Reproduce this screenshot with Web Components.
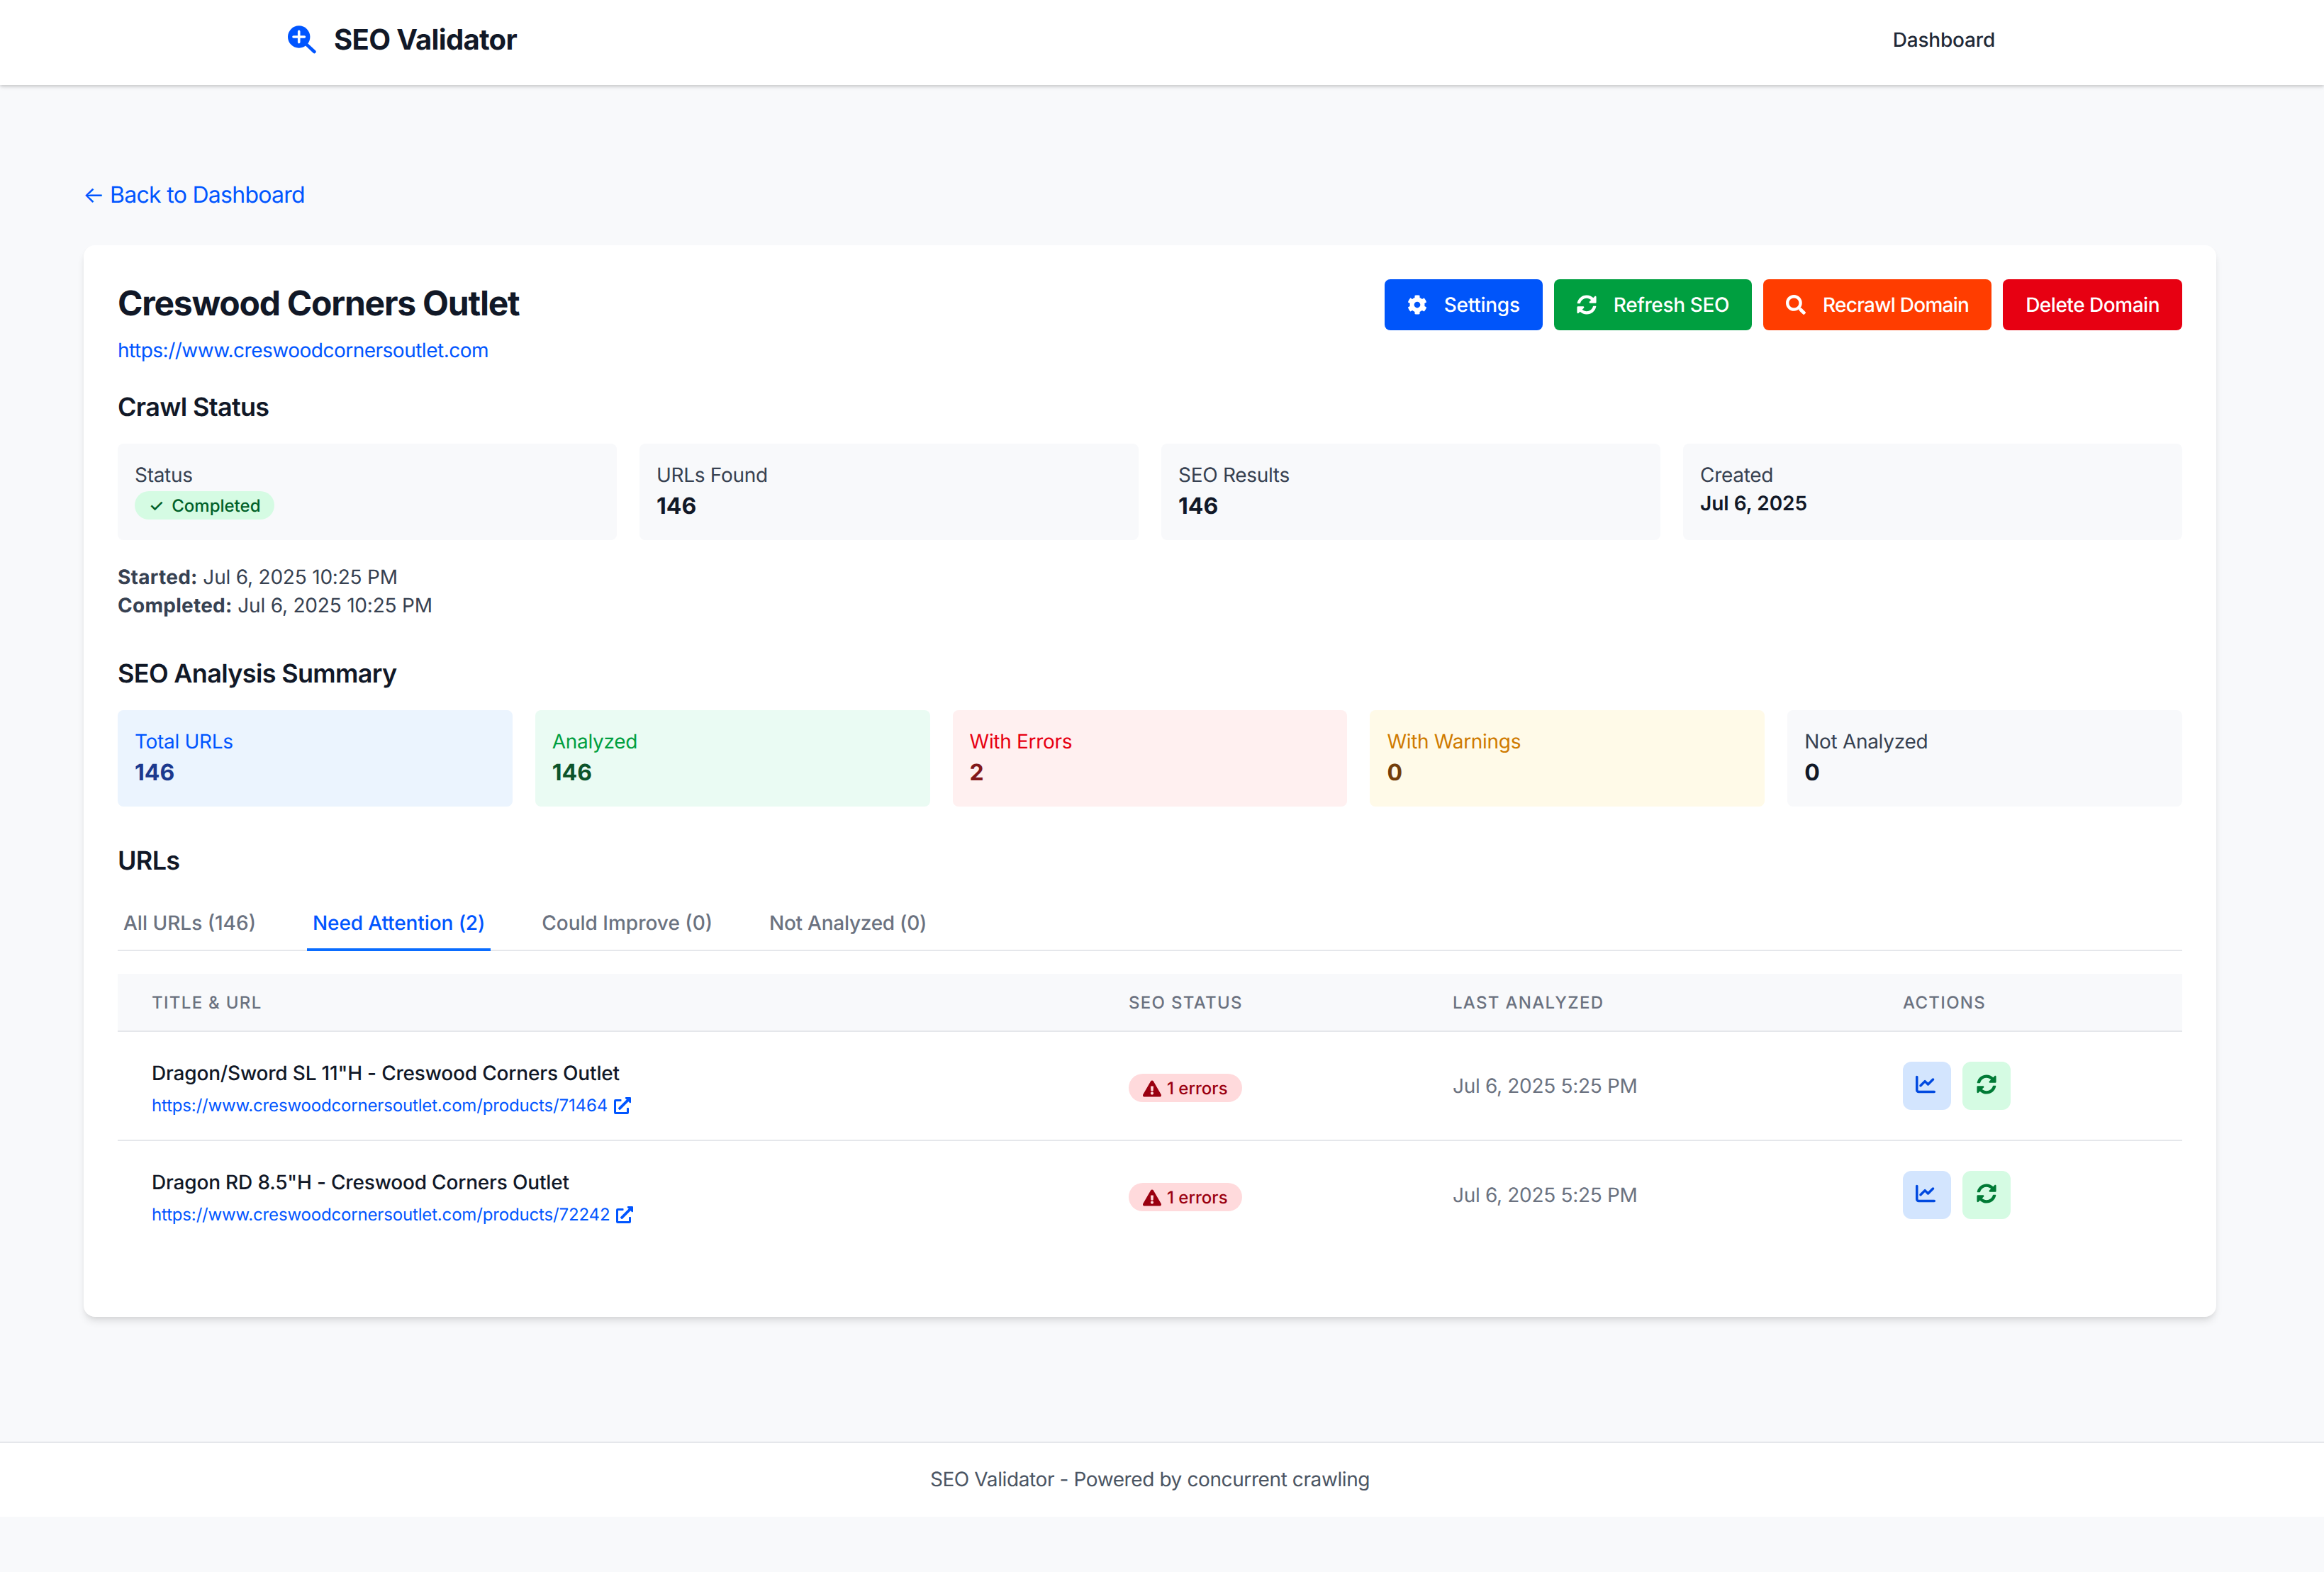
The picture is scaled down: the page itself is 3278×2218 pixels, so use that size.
<!DOCTYPE html>
<html lang="en"><head><meta charset="utf-8"><title>SEO Validator</title>
<style>
html{zoom:2;background:#f8f9fb}
body{margin:0;font-family:Inter,"Liberation Sans",sans-serif;color:#111827;background:#f8f9fb;text-rendering:geometricPrecision;-webkit-font-smoothing:antialiased}
</style></head><body>
<seo-header></seo-header>
<seo-main></seo-main>
<seo-footer></seo-footer>
<script>
const ICONS={
cog:['0 0 512 512','M487.4 315.7l-42.6-24.6c4.3-23.2 4.3-47 0-70.2l42.6-24.6c4.9-2.8 7.1-8.6 5.5-14-11.1-35.6-30-67.8-54.7-94.6-3.8-4.1-10-5.1-14.8-2.3L380.8 110c-17.9-15.4-38.5-27.3-60.8-35.1V25.8c0-5.6-3.9-10.5-9.4-11.7-36.7-8.2-74.3-7.8-109.2 0-5.5 1.2-9.4 6.1-9.4 11.7V75c-22.2 7.9-42.8 19.8-60.8 35.1L88.7 85.5c-4.9-2.8-11-1.9-14.8 2.3-24.7 26.7-43.6 58.9-54.7 94.6-1.7 5.4.6 11.2 5.5 14L67.3 221c-4.3 23.2-4.3 47 0 70.2l-42.6 24.6c-4.9 2.8-7.1 8.6-5.5 14 11.1 35.6 30 67.8 54.7 94.6 3.8 4.1 10 5.1 14.8 2.3l42.6-24.6c17.9 15.4 38.5 27.3 60.8 35.1v49.2c0 5.6 3.9 10.5 9.4 11.7 36.7 8.2 74.3 7.8 109.2 0 5.5-1.2 9.4-6.1 9.4-11.7v-49.2c22.2-7.9 42.8-19.8 60.8-35.1l42.6 24.6c4.9 2.8 11 1.9 14.8-2.3 24.7-26.7 43.6-58.9 54.7-94.6 1.5-5.5-.7-11.3-5.6-14.1zM256 336c-44.1 0-80-35.9-80-80s35.9-80 80-80 80 35.9 80 80-35.9 80-80 80z'],
sync:['0 0 512 512','M370.72 133.28C339.458 104.008 298.888 87.962 255.848 88c-77.458.068-144.328 53.178-162.791 126.85-1.344 5.363-6.122 9.15-11.651 9.15H24.103c-7.498 0-13.194-6.807-11.807-14.176C33.933 94.924 134.813 8 256 8c66.448 0 126.791 26.136 171.315 68.685L463.03 40.97C478.149 25.851 504 36.559 504 57.941V192c0 13.255-10.745 24-24 24H345.941c-21.382 0-32.09-25.851-16.971-40.971l41.75-41.749zM32 296h134.059c21.382 0 32.09 25.851 16.971 40.971l-41.75 41.75c31.262 29.273 71.835 45.319 114.876 45.28 77.418-.07 144.315-53.144 162.787-126.849 1.344-5.363 6.122-9.15 11.651-9.15h57.304c7.498 0 13.194 6.807 11.807 14.176C478.067 417.076 377.187 504 256 504c-66.448 0-126.791-26.136-171.315-68.685L48.97 471.03C33.851 486.149 8 475.441 8 454.059V320c0-13.255 10.745-24 24-24z'],
search:['0 0 512 512','M505 442.7L405.3 343c-4.5-4.5-10.6-7-17-7H372c27.6-35.3 44-79.7 44-128C416 93.1 322.9 0 208 0S0 93.1 0 208s93.1 208 208 208c48.3 0 92.7-16.4 128-44v16.3c0 6.4 2.5 12.5 7 17l99.7 99.7c9.4 9.4 24.6 9.4 33.9 0l28.3-28.3c9.4-9.4 9.4-24.6.1-34zM208 336c-70.7 0-128-57.2-128-128 0-70.7 57.2-128 128-128 70.7 0 128 57.2 128 128 0 70.7-57.2 128-128 128z'],
chart:['0 0 512 512','M64 64c0-17.7-14.3-32-32-32S0 46.3 0 64V400c0 44.2 35.8 80 80 80H480c17.7 0 32-14.3 32-32s-14.3-32-32-32H80c-8.8 0-16-7.2-16-16V64zm406.6 86.6c12.5-12.5 12.5-32.8 0-45.3s-32.8-12.5-45.3 0L320 210.7l-57.4-57.4c-12.5-12.5-32.8-12.5-45.3 0l-112 112c-12.5 12.5-12.5 32.8 0 45.3s32.8 12.5 45.3 0L240 221.3l57.4 57.4c12.5 12.5 32.8 12.5 45.3 0l128-128z'],
warn:['0 0 576 512','M569.517 440.013C587.975 472.007 564.806 512 527.94 512H48.054c-36.937 0-59.999-40.055-41.577-71.987L246.423 24.028c18.467-32.009 64.72-31.951 83.154 0l239.94 416.985zM288 354c-25.405 0-46 20.595-46 46s20.595 46 46 46 46-20.595 46-46-20.595-46-46-46zm-43.673-165.346l7.418 136c.347 6.364 5.609 11.346 11.982 11.346h48.546c6.373 0 11.635-4.982 11.982-11.346l7.418-136c.375-6.874-5.098-12.654-11.982-12.654h-63.383c-6.884 0-12.356 5.78-11.981 12.654z'],
ext:['0 0 512 512','M432,320H400a16,16,0,0,0-16,16V448H64V128H208a16,16,0,0,0,16-16V80a16,16,0,0,0-16-16H48A48,48,0,0,0,0,112V464a48,48,0,0,0,48,48H400a48,48,0,0,0,48-48V336A16,16,0,0,0,432,320ZM488,0h-128c-21.37,0-32.05,25.91-17,41l35.73,35.73L135,320.37a24,24,0,0,0,0,34L157.67,377a24,24,0,0,0,34,0L435.28,133.32,471,169c15,15,41,4.5,41-17V24A24,24,0,0,0,488,0Z']
};
const icon=(n,w)=>`<svg width="${w}" height="${w}" viewBox="${ICONS[n][0]}" fill="currentColor" aria-hidden="true" style="display:block;flex:none"><path d="${ICONS[n][1]}"/></svg>`;
function def(name,css,html){
  customElements.define(name,class extends HTMLElement{
    connectedCallback(){
      if(this.shadowRoot)return;
      const r=this.attachShadow({mode:'open'});
      r.innerHTML=`<style>*{box-sizing:border-box}:host{box-sizing:border-box}${css}</style>`+(typeof html==='function'?html(this):html);
    }
  });
}
def('seo-header',`:host{display:block;background:#fff;height:60px;box-shadow:0 1px 3px rgba(0,0,0,.12),0 1px 2px rgba(0,0,0,.1)}
nav{display:flex;align-items:center;justify-content:space-between;height:100%;margin-left:203px;width:1204px;padding-bottom:4px}
.brand{display:flex;align-items:center;gap:12.5px;font-size:20px;line-height:28px;font-weight:700;color:#111827;letter-spacing:-.33px}
.dash{font-size:14px;line-height:20px;font-weight:500;color:#1f2937;letter-spacing:-.1px}`,
`<nav><div class="brand"><svg width="20" height="20" viewBox="0 0 20 20" aria-hidden="true" style="display:block"><circle cx="7.85" cy="8" r="7.85" fill="#0055ff"/><path d="M12.6 12.8L18.7 18.5" stroke="#0055ff" stroke-width="2.3" stroke-linecap="round"/><path d="M4 8h7.7M7.85 4.2v7.6" stroke="#fff" stroke-width="1.8" stroke-linecap="round"/></svg><span>SEO Validator</span></div><span class="dash">Dashboard</span></nav>`);
def('seo-footer',`:host{display:block;background:#fff;border-top:1px solid #e5e7eb;height:53px;padding-right:17px;margin-top:88px}
p{margin:0;text-align:center;font-size:14px;line-height:51px;color:#4b5563;letter-spacing:-.2px}`,`<p>SEO Validator - Powered by concurrent crawling</p>`);
def('seo-btn',`:host{display:inline-flex;align-items:center;height:36px;padding:0 16px;border-radius:4px;color:#fff;font-size:14px;line-height:20px;font-weight:500;background:var(--b);letter-spacing:var(--ls,0)}
::slotted(svg){margin-right:12px}`,`<slot></slot>`);
def('seo-stat',`:host{display:block;border-radius:4px;padding:12px;background:var(--bg,#f8f9fb);height:68px}
.l{font-size:14px;line-height:20px;color:var(--lc,#374151);letter-spacing:-.15px}
.v{font-size:16px;line-height:24px;font-weight:700;color:var(--vc,#111827)}`,
h=>`<div class="l">${h.getAttribute('label')}</div><div class="v"><slot></slot></div>`);
def('seo-badge',`:host{display:inline-flex;align-items:center;height:20px;padding:1px 10px 0;border-radius:10px;font-size:12px;line-height:16px;font-weight:500;background:var(--bg);color:var(--c)}
::slotted(svg){margin-right:4px}`,`<slot></slot>`);
def('seo-h2',`:host{display:block;font-size:18px;line-height:28px;font-weight:600;color:#111827;letter-spacing:-.33px}`,`<slot></slot>`);
def('seo-tabs',`:host{display:flex;gap:32px;border-bottom:1px solid #e5e7eb;height:31px;margin-top:19px}
a{display:block;height:31px;padding:1.2px 4px 0;font-size:14px;line-height:20px;font-weight:500;color:#6b7280;border-bottom:2px solid transparent}
a:first-child{letter-spacing:.12px}
a.on{color:#0055ff;border-bottom-color:#0a6cff;letter-spacing:-.05px}
a:nth-child(3){letter-spacing:-.05px}
a:last-child{letter-spacing:-.13px}`,
`<a>All URLs (146)</a><a class="on">Need Attention (2)</a><a>Could Improve (0)</a><a>Not Analyzed (0)</a>`);
def('seo-row',`:host{display:grid;grid-template-columns:689px 228.5px 317.5px 221px;height:77px;border-bottom:var(--bb,1px solid #e5e7eb);color:#111827}
.c{padding-left:24px}
.t{font-size:14px;line-height:20px;font-weight:500;color:#111827;padding-top:19px;letter-spacing:-.09px}
.u{display:flex;align-items:center;gap:4.5px;font-size:12px;line-height:16px;color:#0055ff;margin-top:5px;letter-spacing:-.08px}
.s{padding-top:29.5px}
.d{padding-top:28px;font-size:14px;line-height:20px;color:#6b7280;letter-spacing:-.16px}
.a{padding-top:21px;display:flex;gap:8px}
.ib{width:34px;height:34px;border-radius:6px;display:flex;align-items:center;justify-content:center;padding-bottom:2.4px}
.b1{background:#d3e5fe;color:#0049e0;padding-right:2px}.b2{background:#d5fbe3;color:#007a35}`,
h=>`<div class="c"><div class="t">${h.getAttribute('title')}</div><div class="u">${h.getAttribute('url')}${icon('ext',12)}</div></div>
<div class="c s"><seo-badge style="--bg:#ffdadc;--c:#9a0010">${icon('warn',13)}1 errors</seo-badge></div>
<div class="c d">${h.getAttribute('date')}</div>
<div class="c a"><div class="ib b1">${icon('chart',14)}</div><div class="ib b2">${icon('sync',14)}</div></div>`);
def('seo-table',`:host{display:block;margin-top:16px}
.h{display:grid;grid-template-columns:689px 228.5px 317.5px 221px;height:41px;background:#f8f9fb;border-bottom:1px solid #e5e7eb;font-size:12px;line-height:41px;font-weight:500;letter-spacing:.65px;color:#6b7280}
.h div{padding-left:24px}`,
`<div class="h"><div>TITLE &amp; URL</div><div>SEO STATUS</div><div>LAST ANALYZED</div><div>ACTIONS</div></div><slot></slot>`);
def('seo-card',`:host{display:block;background:#fff;border-radius:8px;box-shadow:0 4px 6px -1px rgba(0,0,0,.1),0 2px 4px -2px rgba(0,0,0,.1);padding:24px;height:756px}
.top{display:flex;justify-content:space-between;align-items:flex-start}
h1{margin:0;padding-top:1px;font-size:24px;line-height:32px;font-weight:700;color:#111827;letter-spacing:-.62px}
.link{display:block;font-size:14px;line-height:20px;color:#0055ff;margin-top:7px;letter-spacing:-.25px}
.btns{display:flex;gap:8px}
.g4{display:grid;grid-template-columns:repeat(4,352px);gap:16px;margin-top:12px}
.g5{display:grid;grid-template-columns:repeat(5,1fr);gap:16px;margin-top:12px}
.times{margin:16px 0 24px;font-size:14px;line-height:20px;color:#374151;letter-spacing:-.1px}
.times b{font-weight:700;letter-spacing:.13px}
.sec{margin-top:16px}.urls{margin-top:24px}
.blue{--bg:#ebf4fe;--lc:#0055ff;--vc:#1c398e}
.green{--bg:#eafbf3;--lc:#009f40;--vc:#0d542b}
.red{--bg:#fff0f0;--lc:#e70012;--vc:#82181a}
.yellow{--bg:#fffae8;--lc:#cf7a00;--vc:#733e0a}
.ck{margin-right:5.5px}
.st{display:flex;width:fit-content;margin-top:1.5px}
.dt{display:block;font-size:14px;line-height:20px;font-weight:600;color:#111827}`,
`<div class="top"><div><h1>Creswood Corners Outlet</h1><a class="link">https://www.creswoodcornersoutlet.com</a></div>
<div class="btns"><seo-btn style="--b:#0055fa;--ls:-.13px">${icon('cog',14)}Settings</seo-btn><seo-btn style="--b:#009f40;--ls:-.19px">${icon('sync',14)}Refresh SEO</seo-btn><seo-btn style="--b:#ff3d00;--ls:-.37px">${icon('search',14)}Recrawl Domain</seo-btn><seo-btn style="--b:#e70012;--ls:-.24px">Delete Domain</seo-btn></div></div>
<seo-h2 class="sec">Crawl Status</seo-h2>
<div class="g4"><seo-stat label="Status"><seo-badge class="st" style="--bg:#d5fbe3;--c:#006028"><span class="ck">✓</span>Completed</seo-badge></seo-stat><seo-stat label="URLs Found">146</seo-stat><seo-stat label="SEO Results">146</seo-stat><seo-stat label="Created"><span class="dt">Jul 6, 2025</span></seo-stat></div>
<div class="times"><b>Started:</b> Jul 6, 2025 10:25 PM<br><b>Completed:</b> Jul 6, 2025 10:25 PM</div>
<seo-h2>SEO Analysis Summary</seo-h2>
<div class="g5"><seo-stat class="blue" label="Total URLs">146</seo-stat><seo-stat class="green" label="Analyzed">146</seo-stat><seo-stat class="red" label="With Errors">2</seo-stat><seo-stat class="yellow" label="With Warnings">0</seo-stat><seo-stat label="Not Analyzed">0</seo-stat></div>
<seo-h2 class="urls">URLs</seo-h2>
<seo-tabs></seo-tabs>
<seo-table>
<seo-row title="Dragon/Sword SL 11&quot;H - Creswood Corners Outlet" url="https://www.creswoodcornersoutlet.com/products/71464" date="Jul 6, 2025 5:25 PM"></seo-row>
<seo-row style="--bb:0" title="Dragon RD 8.5&quot;H - Creswood Corners Outlet" url="https://www.creswoodcornersoutlet.com/products/72242" date="Jul 6, 2025 5:25 PM"></seo-row>
</seo-table>`);
def('seo-main',`:host{display:block;width:1504px;margin-left:59px;padding-top:65px}
.back{display:block;font-size:16px;line-height:24px;color:#0055ff;padding-top:.5px;margin:0 0 23.5px -.5px;letter-spacing:-.36px}`,
`<a class="back">← Back to Dashboard</a><seo-card></seo-card>`);
</script>
</body></html>
